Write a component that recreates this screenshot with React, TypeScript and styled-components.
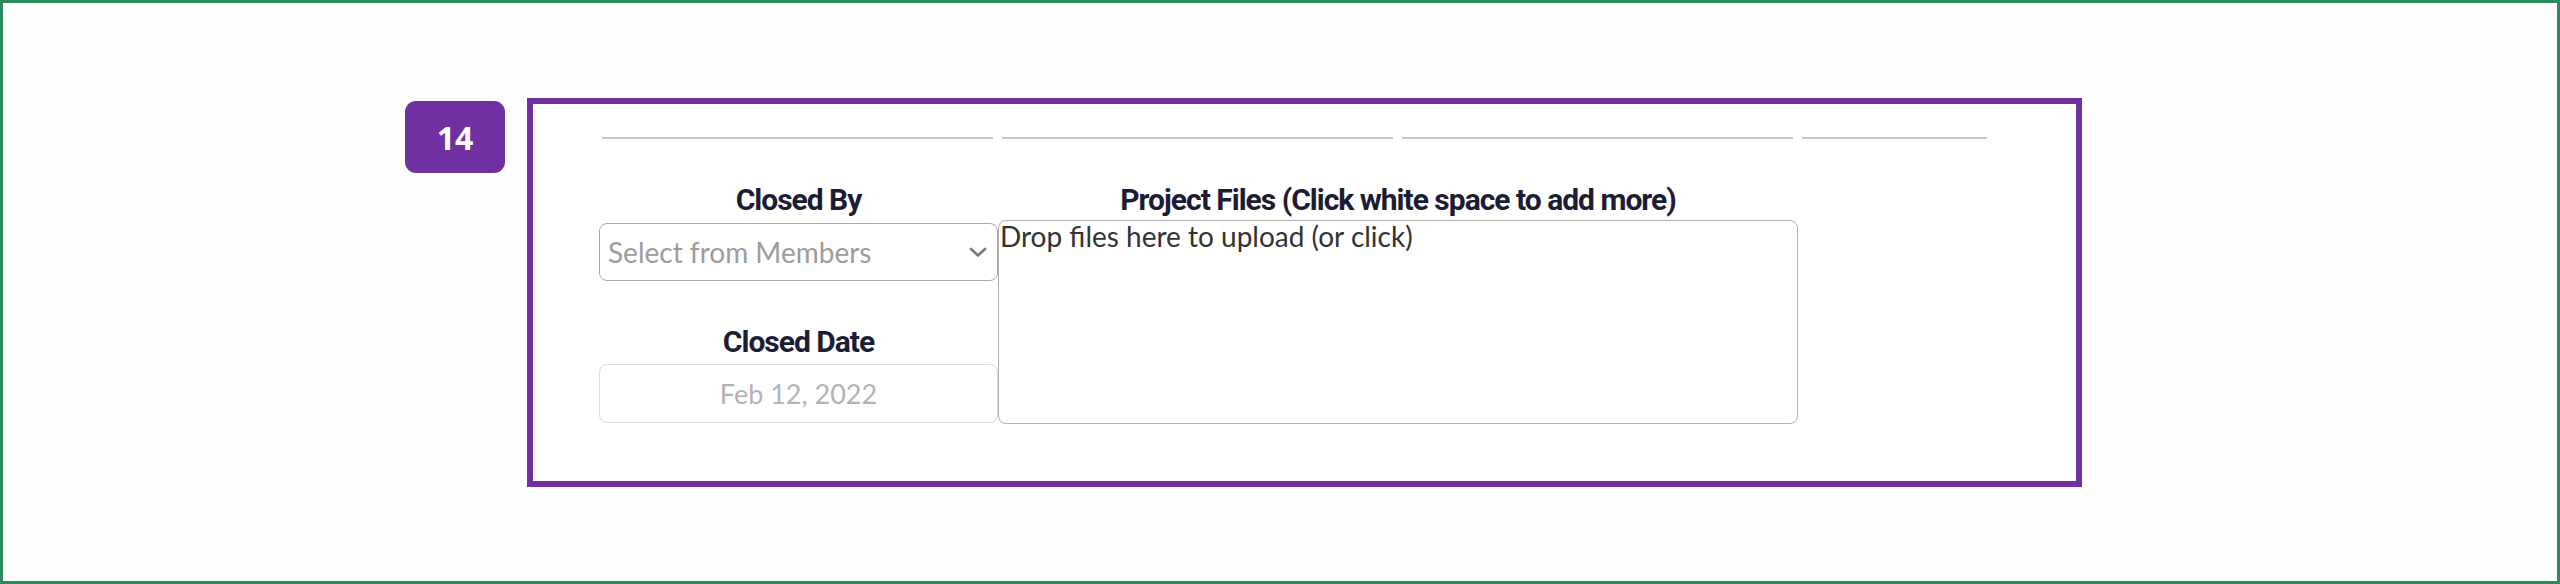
import React from "react";
import styled, { createGlobalStyle } from "styled-components";

const Global = createGlobalStyle`
  html, body { margin: 0; padding: 0; background: #ffffff; }
  * { box-sizing: border-box; }
`;

const Frame = styled.div`
  width: 2560px;
  height: 584px;
  border: 3px solid #2b8a5e;
  background: #fefefe;
  padding: 95px 0 0 402px;
`;

const Row = styled.div`
  display: flex;
  align-items: flex-start;
  gap: 22px;
`;

const Badge = styled.div`
  margin-top: 3px;
  width: 100px;
  height: 72px;
  border-radius: 11px;
  background: #7030a0;
  color: #ffffff;
  font-family: "Open Sans", "Liberation Sans", sans-serif;
  font-weight: 700;
  font-size: 32px;
  display: flex;
  align-items: center;
  justify-content: center;
`;

const Panel = styled.div`
  width: 1555px;
  height: 389px;
  border: 6px solid #7030a0;
  background: #ffffff;
  padding: 33px 0 0 66px;
`;

const Lines = styled.div`
  display: flex;
  gap: 9px;
  margin-left: 3px;
`;

const Segment = styled.div<{ $w: number }>`
  width: ${(p) => p.$w}px;
  height: 2px;
  background: #c6c6c6;
`;

const Form = styled.div`
  display: flex;
  align-items: flex-start;
  margin-top: 46px;
`;

const Column = styled.div<{ $w: number }>`
  width: ${(p) => p.$w}px;
  display: flex;
  flex-direction: column;
`;

const Label = styled.div<{ $gap?: number }>`
  margin-top: ${(p) => p.$gap ?? 0}px;
  font-family: Roboto, "Liberation Sans", sans-serif;
  font-weight: 700;
  font-size: 30px;
  line-height: 30px;
  letter-spacing: -1px;
  color: #1c1c34;
  text-align: center;
  white-space: nowrap;
`;

const SelectBox = styled.div`
  margin-top: 8px;
  height: 58px;
  border: 1.5px solid #a9a9a9;
  border-radius: 8px;
  display: flex;
  align-items: center;
  justify-content: space-between;
  padding: 0 8px 0 8px;
  font-family: Lato, "Liberation Sans", sans-serif;
  font-size: 28px;
  color: #9c9c9c;
`;

const DateBox = styled.div`
  margin-top: 7px;
  height: 59px;
  border: 1px solid #dedede;
  border-radius: 8px;
  display: flex;
  align-items: center;
  justify-content: center;
  font-family: Lato, "Liberation Sans", sans-serif;
  font-size: 27px;
  color: #b3b3b3;
`;

const DropZone = styled.div`
  margin-top: 5px;
  height: 204px;
  border: 1.5px solid #b0b0b0;
  border-radius: 8px;
  padding: 0 0 0 1px;
  font-family: Lato, "Liberation Sans", sans-serif;
  font-size: 28px;
  line-height: 30px;
  color: #333333;
`;

const Chevron = () => (
  <svg width="22" height="14" viewBox="0 0 22 14" fill="none">
    <path d="M4 4l7 6.5 7-6.5" stroke="#7a7a7a" strokeWidth="2.6" strokeLinecap="round" strokeLinejoin="round" />
  </svg>
);

export default function App() {
  return (
    <>
      <Global />
      <Frame>
        <Row>
          <Badge>14</Badge>
          <Panel>
            <Lines>
              {[391, 391, 391, 185].map((w, i) => (
                <Segment key={i} $w={w} />
              ))}
            </Lines>
            <Form>
              <Column $w={399}>
                <Label>Closed By</Label>
                <SelectBox>
                  <span>Select from Members</span>
                  <Chevron />
                </SelectBox>
                <Label $gap={46}>Closed Date</Label>
                <DateBox>Feb 12, 2022</DateBox>
              </Column>
              <Column $w={800}>
                <Label>Project Files (Click white space to add more)</Label>
                <DropZone>Drop files here to upload (or click)</DropZone>
              </Column>
            </Form>
          </Panel>
        </Row>
      </Frame>
    </>
  );
}
